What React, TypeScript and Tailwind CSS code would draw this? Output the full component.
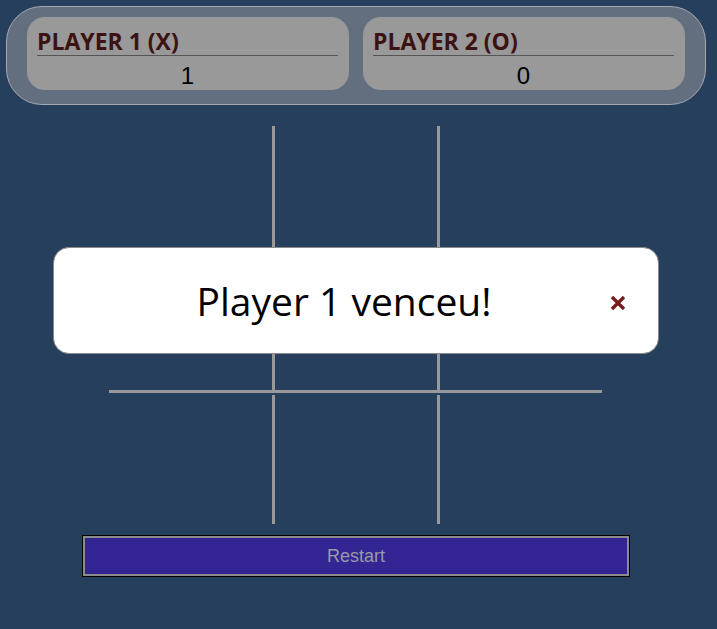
export default function App() {
  const cells = [0, 1, 2];
  const rowH = ["h-[133px]", "h-[132px]", "h-[129px]"];
  return (
    <div className="relative w-[717px] h-[629px] bg-[#253f5d] overflow-hidden" style={{ fontFamily: '"Open Sans", sans-serif' }}>
      <div className="ml-[6px] pt-[6px]">
        <div className="w-[700px] h-[99px] rounded-[36px] border border-[#a3a9b3] bg-[#636e7e] flex gap-[14px] px-[20px] pt-[10px]">
          {["PLAYER 1 (X)", "PLAYER 2 (O)"].map((t, i) => (
            <div key={t} className="w-[322px] h-[73px] rounded-[18px] bg-[#999999] pl-[10px] pr-[11px] pt-[11px]">
              <div className="border-b border-[#555555] text-[23px] leading-[26px] font-bold text-[#3d1212] pb-[1px]">{t}</div>
              <div className="text-center text-[24px] leading-[27px] text-black pt-[6px]" style={{ fontFamily: '"Liberation Sans", Arial, sans-serif' }}>
                {i === 0 ? "1" : "0"}
              </div>
            </div>
          ))}
        </div>
      </div>

      <div className="ml-[109px] mt-[21px] w-[493px] flex flex-col gap-[2px]">
        {cells.map((r) => (
          <div key={r} className="flex">
            {cells.map((c) => (
              <div
                key={c}
                className={
                  (c === 0 ? "w-[166px] " : c === 1 ? "w-[165px] " : "w-[162px] ") +
                  (c < 2 ? "border-r-[3px] " : "") +
                  (r < 2 ? "border-b-[3px] " : "") +
                  rowH[r] +
                  " border-[#999999]"
                }
              />
            ))}
          </div>
        ))}
      </div>

      <div className="ml-[82px] mt-[11px] w-[548px] h-[42px] border border-black">
        <button className="w-full h-full border-2 border-[#8c8c8c] bg-[#332594] text-[#9a9aa8] text-[18px]" style={{ fontFamily: '"Liberation Sans", Arial, sans-serif' }}>
          Restart
        </button>
      </div>

      <div className="absolute left-[53px] top-[247px] w-[606px] h-[107px] bg-white border border-[#8a8a8a] rounded-[16px] flex items-center">
        <div className="flex-1 text-center text-[39px] text-black pl-[36px] pt-[2px]">Player 1 venceu!</div>
        <div className="w-[60px] flex items-center justify-start pl-[12px] pt-[4px]">
          <svg width="16" height="16" viewBox="0 0 16 16">
            <path d="M2 2 L14 14 M14 2 L2 14" stroke="#7a1c1c" strokeWidth="3.4" strokeLinecap="butt" />
          </svg>
        </div>
      </div>
    </div>
  );
}
